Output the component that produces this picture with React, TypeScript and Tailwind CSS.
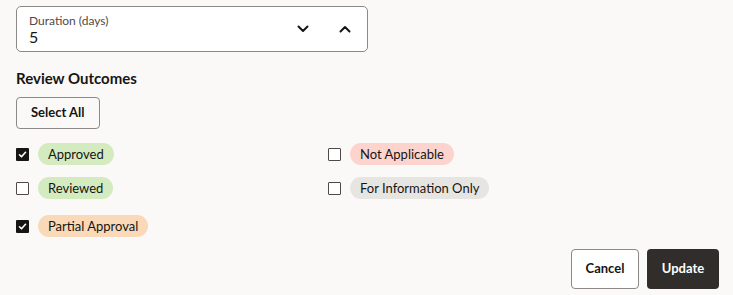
import { useState } from 'react'

type Outcome = {
  label: string
  tone: string
  last?: boolean
}

const outcomes: Outcome[] = [
  { label: 'Approved', tone: 'bg-[#d4eabf]' },
  { label: 'Not Applicable', tone: 'bg-[#fdd4cd]' },
  { label: 'Reviewed', tone: 'bg-[#d4eabf]' },
  { label: 'For Information Only', tone: 'bg-[#e7e5e2]' },
  { label: 'Partial Approval', tone: 'bg-[#f9d9b7]', last: true },
]

function Chevron({ up }: { up?: boolean }) {
  return (
    <svg width="14" height="14" viewBox="0 0 14 14" fill="none">
      <path
        d={up ? 'M2.5 9.5L7 5l4.5 4.5' : 'M2.5 4.5L7 9l4.5-4.5'}
        stroke="#161513"
        strokeWidth="2"
        strokeLinecap="round"
        strokeLinejoin="round"
      />
    </svg>
  )
}

function Checkbox({ checked, onClick }: { checked: boolean; onClick: () => void }) {
  return (
    <button
      onClick={onClick}
      className={
        checked
          ? 'flex h-[13px] w-[13px] shrink-0 items-center justify-center rounded-[1px] bg-[#161513]'
          : 'h-[13px] w-[13px] shrink-0 rounded-[1px] border border-[#4f4a46] bg-white'
      }
    >
      {checked && (
        <svg width="9" height="9" viewBox="0 0 9 9" fill="none">
          <path d="M1.5 4.8l2 2 4-4.5" stroke="#fff" strokeWidth="1.6" strokeLinecap="round" strokeLinejoin="round" />
        </svg>
      )}
    </button>
  )
}

export default function App() {
  const [checked, setChecked] = useState<Record<string, boolean>>({
    Approved: true,
    'Partial Approval': true,
  })

  const toggle = (label: string) => setChecked((prev) => ({ ...prev, [label]: !prev[label] }))

  return (
    <div className="min-h-[295px] bg-[#faf9f8] pt-1.5 font-['Lato',sans-serif] text-[#161513]">
      <div className="pl-4">
        {/* 时长输入 */}
        <div className="flex h-[46px] w-[352px] items-center justify-between rounded-[5px] border border-[#8c8986] bg-white pl-3 pr-[15px]">
          <div className="flex flex-col">
            <span className="text-[12px] leading-[15px] text-[#4f4a46]">Duration (days)</span>
            <span className="text-[16px] leading-[18px]">5</span>
          </div>
          <div className="flex items-center gap-7">
            <Chevron />
            <Chevron up />
          </div>
        </div>

        <h2 className="mt-[17px] text-[15px] font-bold leading-[18px]">Review Outcomes</h2>

        <button className="mt-[10px] h-[32px] rounded-[4px] border border-[#8c8986] px-[14px] text-[13px] font-bold">
          Select All
        </button>

        {/* 选项列表 */}
        <div className="mt-[14px] grid w-[520px] grid-cols-[312px_1fr] gap-y-[12px]">
          {outcomes.map((o) => (
            <div key={o.label} className={`flex h-[22px] items-center gap-[9px] ${o.last ? 'mt-1' : ''}`}>
              <Checkbox checked={!!checked[o.label]} onClick={() => toggle(o.label)} />
              <span className={`whitespace-nowrap rounded-full px-[10px] text-[13px] leading-[22px] ${o.tone}`}>
                {o.label}
              </span>
            </div>
          ))}
        </div>
      </div>

      <div className="mt-[12px] flex justify-end gap-2 pr-[14px]">
        <button className="h-[40px] w-[68px] rounded-[4px] border border-[#8c8986] bg-white text-[13px] font-bold">
          Cancel
        </button>
        <button className="h-[40px] w-[72px] rounded-[4px] bg-[#312d2a] text-[13px] font-bold text-white">
          Update
        </button>
      </div>
    </div>
  )
}
